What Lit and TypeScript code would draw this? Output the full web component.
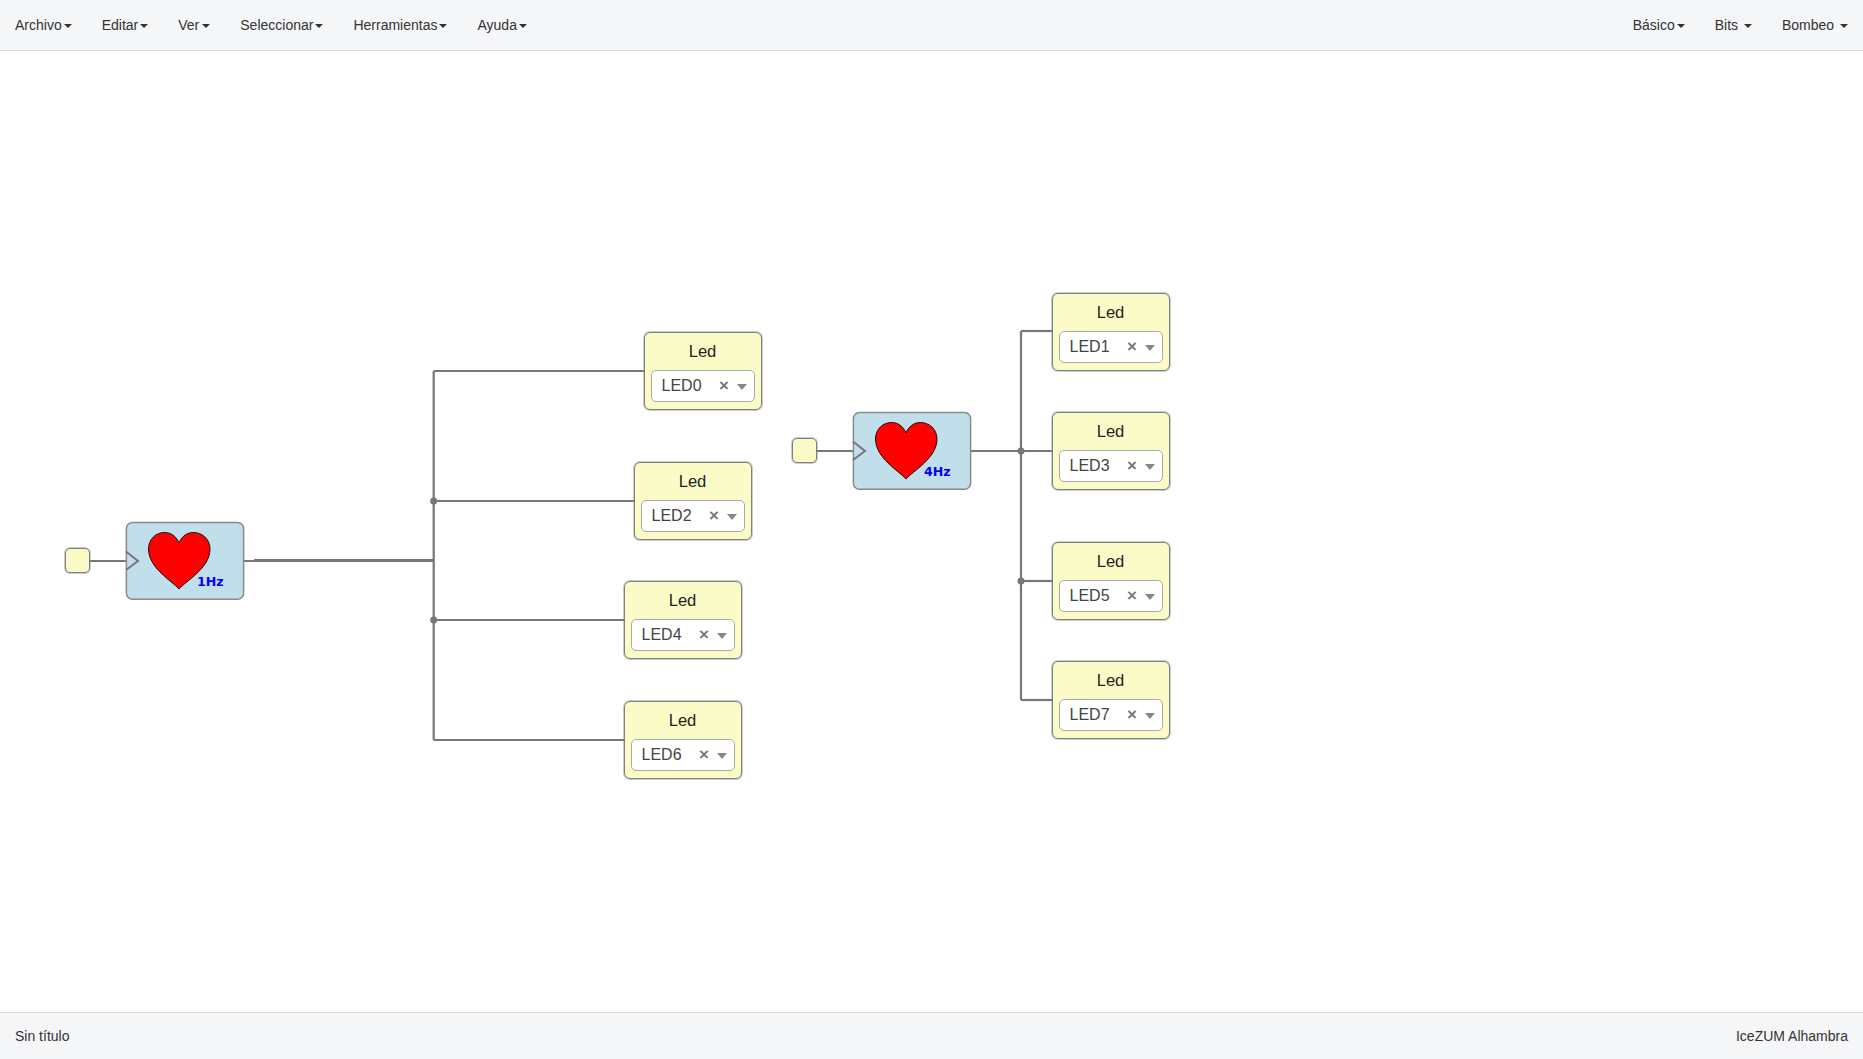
import { LitElement, html, css, svg } from "lit";
import { customElement, property } from "lit/decorators.js";

// canvas origin sits right below the navbar, all diagram coords are relative to it
const NAV_H = 51;

interface LedNode {
  name: string;
  x: number;
  y: number;
}

interface HeartNode {
  label: string;
  x: number;
  y: number;
}

const LEDS: LedNode[] = [
  { name: "LED0", x: 644, y: 332 },
  { name: "LED2", x: 634, y: 462 },
  { name: "LED4", x: 624, y: 581 },
  { name: "LED6", x: 624, y: 701 },
  { name: "LED1", x: 1052, y: 293 },
  { name: "LED3", x: 1052, y: 412 },
  { name: "LED5", x: 1052, y: 542 },
  { name: "LED7", x: 1052, y: 661 },
];

const HEARTS: HeartNode[] = [
  { label: "1Hz", x: 125, y: 521 },
  { label: "4Hz", x: 852, y: 411 },
];

const PORTS = [
  { x: 65, y: 548 },
  { x: 792, y: 438 },
];

const WIRES = [
  // first clock
  "M90 561 H126",
  "M244 561 H434",
  "M433.7 371 V740",
  "M433.7 371 H644",
  "M433.7 501 H634",
  "M433.7 620 H624",
  "M433.7 740 H624",
  // second clock
  "M817 451 H853",
  "M971 451 H1052",
  "M1021 331 V700",
  "M1021 331 H1052",
  "M1021 581 H1052",
  "M1021 700 H1052",
];

const BUS = "M254 560.5 H433";

const JUNCTIONS = [
  [433.7, 501],
  [433.7, 620],
  [1021, 451],
  [1021, 581],
];

@customElement("led-block")
export class LedBlock extends LitElement {
  static styles = css`
    :host {
      display: block;
      width: 118px;
      height: 78px;
    }
    .block {
      box-sizing: border-box;
      width: 100%;
      height: 100%;
      display: flex;
      flex-direction: column;
      padding: 0 6px 7px 6px;
      background: #fbfbc8;
      border: 1px solid #808080;
      border-radius: 6px;
      box-shadow: 0 0 0 1px rgba(128, 128, 128, 0.4);
    }
    .title {
      flex: 1;
      display: flex;
      align-items: center;
      justify-content: center;
      padding-right: 1px;
      font-size: 16.6px;
      color: #222;
    }
    .select {
      box-sizing: border-box;
      height: 32px;
      display: flex;
      align-items: center;
      padding: 0 7px 0 9.5px;
      background: #fff;
      border: 1px solid #aaa;
      border-radius: 5px;
      font-size: 16px;
      color: #444;
    }
    .value {
      flex: 1;
    }
    .clear {
      font-weight: bold;
      font-size: 17px;
      color: #777;
      margin-right: 8px;
    }
    .arrow {
      width: 0;
      height: 0;
      margin-top: 2px;
      border-left: 5px solid transparent;
      border-right: 5px solid transparent;
      border-top: 6px solid #888;
    }
  `;

  @property({ type: String })
  name = "";

  render() {
    return html`
      <div class="block">
        <div class="title">Led</div>
        <div class="select">
          <span class="value">${this.name}</span>
          <span class="clear">×</span>
          <span class="arrow"></span>
        </div>
      </div>
    `;
  }
}

@customElement("heart-block")
export class HeartBlock extends LitElement {
  static styles = css`
    :host {
      display: block;
      width: 120px;
      height: 80px;
    }
    svg {
      display: block;
    }
    .freq {
      font-family: "DejaVu Sans", sans-serif;
      font-weight: bold;
      font-size: 12.6px;
      fill: #0000ff;
    }
  `;

  @property({ type: String })
  label = "";

  render() {
    return html`
      <svg width="120" height="80" viewBox="0 0 120 80">
        <rect
          x="1.4"
          y="1.4"
          width="117.2"
          height="76.9"
          rx="6"
          fill="#c0dfeb"
          stroke="#8a8a8a"
          stroke-width="1.5"
        />
        <path
          d="M1 30.5 L13 40 L1 49"
          fill="none"
          stroke="#777"
          stroke-width="2"
        />
        <path
          d="M54 68 C47 60 23.5 47 23.5 28 C23.5 18 31 11.5 39.5 11.5 C46 11.5 51.5 15.5 54 22 C56.5 15.5 62 11.5 68.5 11.5 C77 11.5 85 18 85 28 C85 47 61 60 54 68 Z"
          fill="#ff0000"
          stroke="#111"
          stroke-width="1"
        />
        <text class="freq" x="72" y="65">${this.label}</text>
      </svg>
    `;
  }
}

@customElement("app-root")
export class AppRoot extends LitElement {
  static styles = css`
    :host {
      display: flex;
      flex-direction: column;
      height: 100vh;
      overflow: hidden;
      font-family: "Liberation Sans", Arial, sans-serif;
      color: #333;
      background: #fff;
    }
    .navbar {
      flex: none;
      box-sizing: border-box;
      height: 51px;
      display: flex;
      justify-content: space-between;
      background: #f5f6f8;
      border-bottom: 1px solid #d8dcdf;
      font-size: 14px;
    }
    .menu {
      display: flex;
      align-items: center;
    }
    .menu-item {
      padding: 0 15px;
      white-space: pre;
    }
    .caret {
      display: inline-block;
      width: 0;
      height: 0;
      margin-left: 2px;
      vertical-align: middle;
      border-top: 4px solid #333;
      border-left: 4px solid transparent;
      border-right: 4px solid transparent;
    }
    .wide .caret {
      margin-left: 3px;
    }
    .canvas {
      flex: 1;
      position: relative;
    }
    .wires {
      position: absolute;
      inset: 0;
      width: 100%;
      height: 100%;
    }
    .node {
      position: absolute;
    }
    .port {
      box-sizing: border-box;
      width: 25px;
      height: 25px;
      background: #fbfbc8;
      border: 1px solid #808080;
      border-radius: 5px;
      box-shadow: 0 0 0 1px rgba(128, 128, 128, 0.4);
    }
    .footer {
      flex: none;
      box-sizing: border-box;
      height: 47px;
      display: flex;
      align-items: center;
      justify-content: space-between;
      padding: 0 15px;
      background: #f5f6f8;
      border-top: 1px solid #d8dcdf;
      font-size: 14px;
    }
  `;

  private renderMenu(items: string[]) {
    return html`
      <div class="menu">
        ${items.map(
          (item) => html`<span class="menu-item ${item === "Ver" ? "wide" : ""}">${item}<span class="caret"></span></span>`
        )}
      </div>
    `;
  }

  private pos(x: number, y: number) {
    return `left: ${x}px; top: ${y - NAV_H}px`;
  }

  render() {
    return html`
      <div class="navbar">
        ${this.renderMenu(["Archivo", "Editar", "Ver", "Seleccionar", "Herramientas", "Ayuda"])}
        ${this.renderMenu(["Básico", "Bits ", "Bombeo "])}
      </div>

      <div class="canvas">
        <svg class="wires">
          <g transform="translate(0 ${-NAV_H})" fill="none" stroke="#777">
            ${WIRES.map((d) => svg`<path d=${d} stroke-width="2.2"></path>`)}
            <path d=${BUS} stroke-width="3"></path>
            ${JUNCTIONS.map(
              ([x, y]) => svg`<circle cx=${x} cy=${y} r="3.5" fill="#777" stroke="none"></circle>`
            )}
          </g>
        </svg>

        ${PORTS.map(
          (p) => html`<div class="node port" style=${this.pos(p.x, p.y)}></div>`
        )}
        ${HEARTS.map(
          (h) => html`<heart-block class="node" style=${this.pos(h.x, h.y)} .label=${h.label}></heart-block>`
        )}
        ${LEDS.map(
          (l) => html`<led-block class="node" style=${this.pos(l.x, l.y)} .name=${l.name}></led-block>`
        )}
      </div>

      <div class="footer">
        <span>Sin título</span>
        <span>IceZUM Alhambra</span>
      </div>
    `;
  }
}
